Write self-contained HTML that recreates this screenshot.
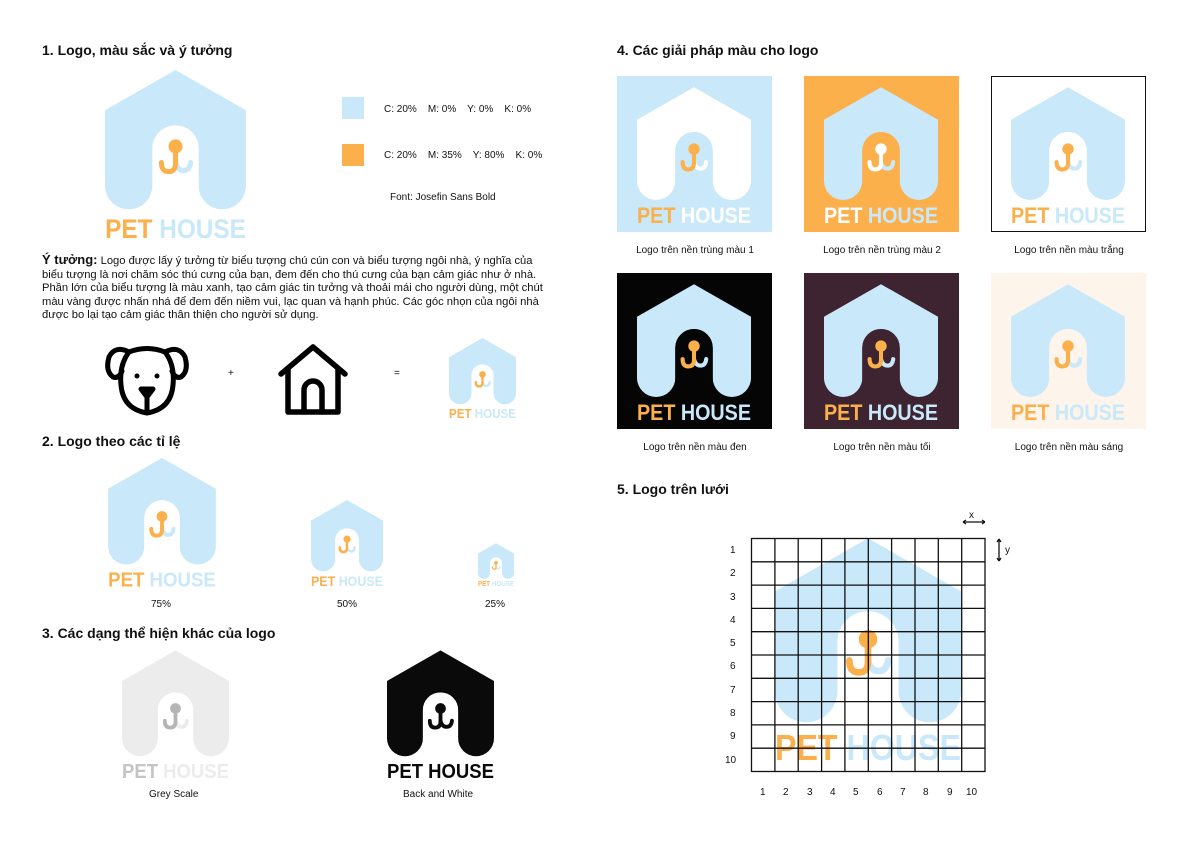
<!DOCTYPE html>
<html><head><meta charset="utf-8"><style>
body{margin:0;width:1191px;height:842px;background:#fff;position:relative;overflow:hidden;font-family:"Liberation Sans","DejaVu Sans",sans-serif;color:#111}
.a{position:absolute}
h2{position:absolute;margin:0;font-size:14px;font-weight:bold}
.s{font-size:10px;position:absolute;white-space:nowrap}
.box{position:absolute;width:155px;height:156px}
.c{text-align:center}
svg.l{position:absolute;overflow:visible}
</style></head><body>
<svg width="0" height="0" style="position:absolute">
<defs>
<symbol id="h" viewBox="0 0 140 140" overflow="visible">
<path d="M0 40 L70 0 L140 40 L140 115 A23.5 23.5 0 0 1 93 115 L93 78 A23 23 0 0 0 47 78 L47 115 A23.5 23.5 0 0 1 0 115 Z" style="fill:var(--h)"/>
<path d="M47 78 A23 23 0 0 1 93 78 L93 138 L47 138 Z" style="fill:var(--w)"/>
<path d="M70 92 Q72 100 78 100 Q84 100 85 92" fill="none" style="stroke:var(--b)" stroke-width="5" stroke-linecap="round"/>
<path d="M70 78 L70 93 Q70 101 63 101 Q56 101 56 92" fill="none" style="stroke:var(--o)" stroke-width="5" stroke-linecap="round"/>
<circle cx="70" cy="76" r="7" style="fill:var(--o)"/>
</symbol>
</defs></svg>

<h2 style="left:42px;top:42px">1. Logo, màu sắc và ý tưởng</h2>
<svg class="l" style="left:105px;top:70px;--h:#c9e8fa;--w:#fff;--o:#fbb04c;--b:#c9e8fa" width="141" height="170" viewBox="0 0 140 169"><use href="#h" width="140" height="140"/><text x="0" y="167" font-size="27" font-weight="bold" textLength="140" lengthAdjust="spacingAndGlyphs" fill="#fbb04c">PET <tspan fill="#c9e8fa">HOUSE</tspan></text></svg>
<div class="a" style="left:342px;top:97px;width:22px;height:22px;background:#c9e8fa"></div>
<div class="a" style="left:342px;top:144px;width:22px;height:22px;background:#fbb04c"></div>
<div class="s" style="left:384px;top:104px">C: 20% &nbsp;&nbsp; M: 0% &nbsp;&nbsp; Y: 0% &nbsp;&nbsp; K: 0%</div>
<div class="s" style="left:384px;top:150px">C: 20% &nbsp;&nbsp; M: 35% &nbsp;&nbsp; Y: 80% &nbsp;&nbsp; K: 0%</div>
<div class="s" style="left:390px;top:192px">Font: Josefin Sans Bold</div>
<div class="a" style="left:42px;top:253px;width:502px;font-size:11.2px;line-height:13.5px"><b style="font-size:13px">Ý tưởng:</b> Logo được lấy ý tưởng từ biểu tượng chú cún con và biểu tượng ngôi nhà, ý nghĩa của biểu tượng là nơi chăm sóc thú cưng của bạn, đem đến cho thú cưng của bạn cảm giác như ở nhà. Phần lớn của biểu tượng là màu xanh, tạo cảm giác tin tưởng và thoải mái cho người dùng, một chút màu vàng được nhấn nhá để đem đến niềm vui, lạc quan và hạnh phúc. Các góc nhọn của ngôi nhà được bo lại tạo cảm giác thân thiện cho người sử dụng.</div>

<svg class="l" style="left:105px;top:343px" width="84" height="74" viewBox="0 0 84 74" fill="none" stroke="#000" stroke-width="5" stroke-linecap="round" stroke-linejoin="round">
<path d="M24 9 Q42 2 60 9 Q70 22 68 42 Q66 66 42 70 Q18 66 16 42 Q14 22 24 9Z"/>
<path d="M24 9 Q10 2 4 14 Q0 28 8 34 Q14 36 17 28"/>
<path d="M60 9 Q74 2 80 14 Q84 28 76 34 Q70 36 67 28"/>
<path d="M36 46 L48 46 L42 54 Z" fill="#000"/><path d="M42 54 L42 69"/>
<circle cx="32" cy="33" r="2.5" fill="#000" stroke="none"/><circle cx="52" cy="33" r="2.5" fill="#000" stroke="none"/>
</svg>
<div class="s" style="left:228px;top:368px">+</div>
<svg class="l" style="left:278px;top:344px" width="70" height="71" viewBox="0 0 70 71" fill="none" stroke="#000" stroke-width="5.5" stroke-linecap="round" stroke-linejoin="round">
<path d="M3 30 L35 3 L67 30"/><path d="M10 25 L10 68 L60 68 L60 25"/><path d="M26 68 L26 46 A9 9 0 0 1 44 46 L44 68"/>
</svg>
<div class="s" style="left:394px;top:368px">=</div>
<svg class="l" style="left:449px;top:338px;--h:#c9e8fa;--w:#fff;--o:#fbb04c;--b:#c9e8fa" width="67" height="81" viewBox="0 0 140 169"><use href="#h" width="140" height="140"/><text x="0" y="167" font-size="27" font-weight="bold" textLength="140" lengthAdjust="spacingAndGlyphs" fill="#fbb04c">PET <tspan fill="#c9e8fa">HOUSE</tspan></text></svg>

<h2 style="left:42px;top:433px">2. Logo theo các tỉ lệ</h2>
<svg class="l" style="left:108px;top:458px;--h:#c9e8fa;--w:#fff;--o:#fbb04c;--b:#c9e8fa" width="108" height="130" viewBox="0 0 140 169"><use href="#h" width="140" height="140"/><text x="0" y="167" font-size="27" font-weight="bold" textLength="140" lengthAdjust="spacingAndGlyphs" fill="#fbb04c">PET <tspan fill="#c9e8fa">HOUSE</tspan></text></svg>
<div class="s" style="left:151px;top:599px">75%</div>
<svg class="l" style="left:311px;top:500px;--h:#c9e8fa;--w:#fff;--o:#fbb04c;--b:#c9e8fa" width="72" height="87" viewBox="0 0 140 169"><use href="#h" width="140" height="140"/><text x="0" y="167" font-size="27" font-weight="bold" textLength="140" lengthAdjust="spacingAndGlyphs" fill="#fbb04c">PET <tspan fill="#c9e8fa">HOUSE</tspan></text></svg>
<div class="s" style="left:337px;top:599px">50%</div>
<svg class="l" style="left:478px;top:543px;--h:#c9e8fa;--w:#fff;--o:#fbb04c;--b:#c9e8fa" width="36" height="44" viewBox="0 0 140 169"><use href="#h" width="140" height="140"/><text x="0" y="167" font-size="27" font-weight="bold" textLength="140" lengthAdjust="spacingAndGlyphs" fill="#fbb04c">PET <tspan fill="#c9e8fa">HOUSE</tspan></text></svg>
<div class="s" style="left:485px;top:599px">25%</div>

<h2 style="left:42px;top:625px">3. Các dạng thể hiện khác của logo</h2>
<svg class="l" style="left:122px;top:650px;--h:#ececec;--w:#fff;--o:#b5b5b5;--b:#ececec" width="107" height="130" viewBox="0 0 140 169"><use href="#h" width="140" height="140"/><text x="0" y="167" font-size="27" font-weight="bold" textLength="140" lengthAdjust="spacingAndGlyphs" fill="#c4c4c4">PET <tspan fill="#ececec">HOUSE</tspan></text></svg>
<div class="s" style="left:149px;top:789px">Grey Scale</div>
<svg class="l" style="left:387px;top:650px;--h:#0a0a0a;--w:#fff;--o:#0a0a0a;--b:#0a0a0a" width="107" height="130" viewBox="0 0 140 169"><use href="#h" width="140" height="140"/><text x="0" y="167" font-size="27" font-weight="bold" textLength="140" lengthAdjust="spacingAndGlyphs" fill="#0a0a0a">PET HOUSE</text></svg>
<div class="s" style="left:403px;top:789px">Back and White</div>

<h2 style="left:617px;top:42px">4. Các giải pháp màu cho logo</h2>
<div class="box" style="left:617px;top:76px;background:#c9e8fa"></div>
<div class="box" style="left:804px;top:76px;background:#fbb04c"></div>
<div class="box" style="left:991px;top:76px;background:#fff;border:1.5px solid #111;box-sizing:border-box"></div>
<div class="box" style="left:617px;top:273px;background:#050505"></div>
<div class="box" style="left:804px;top:273px;background:#3e2430"></div>
<div class="box" style="left:991px;top:273px;background:#fdf4ec"></div>
<svg class="l" style="left:637px;top:87px;--h:#fff;--w:#c9e8fa;--o:#fbb04c;--b:#fff" width="114" height="138" viewBox="0 0 140 169"><use href="#h" width="140" height="140"/><text x="0" y="167" font-size="27" font-weight="bold" textLength="140" lengthAdjust="spacingAndGlyphs" fill="#fbb04c">PET <tspan fill="#fff">HOUSE</tspan></text></svg>
<svg class="l" style="left:824px;top:87px;--h:#c9e8fa;--w:#fbb04c;--o:#fff;--b:#c9e8fa" width="114" height="138" viewBox="0 0 140 169"><use href="#h" width="140" height="140"/><text x="0" y="167" font-size="27" font-weight="bold" textLength="140" lengthAdjust="spacingAndGlyphs" fill="#fff">PET <tspan fill="#c9e8fa">HOUSE</tspan></text></svg>
<svg class="l" style="left:1011px;top:87px;--h:#c9e8fa;--w:#fff;--o:#fbb04c;--b:#c9e8fa" width="114" height="138" viewBox="0 0 140 169"><use href="#h" width="140" height="140"/><text x="0" y="167" font-size="27" font-weight="bold" textLength="140" lengthAdjust="spacingAndGlyphs" fill="#fbb04c">PET <tspan fill="#c9e8fa">HOUSE</tspan></text></svg>
<svg class="l" style="left:637px;top:284px;--h:#c9e8fa;--w:#050505;--o:#fbb04c;--b:#c9e8fa" width="114" height="138" viewBox="0 0 140 169"><use href="#h" width="140" height="140"/><text x="0" y="167" font-size="27" font-weight="bold" textLength="140" lengthAdjust="spacingAndGlyphs" fill="#fbb04c">PET <tspan fill="#c9e8fa">HOUSE</tspan></text></svg>
<svg class="l" style="left:824px;top:284px;--h:#c9e8fa;--w:#3e2430;--o:#fbb04c;--b:#c9e8fa" width="114" height="138" viewBox="0 0 140 169"><use href="#h" width="140" height="140"/><text x="0" y="167" font-size="27" font-weight="bold" textLength="140" lengthAdjust="spacingAndGlyphs" fill="#fbb04c">PET <tspan fill="#c9e8fa">HOUSE</tspan></text></svg>
<svg class="l" style="left:1011px;top:284px;--h:#c9e8fa;--w:#fdf4ec;--o:#fbb04c;--b:#c9e8fa" width="114" height="138" viewBox="0 0 140 169"><use href="#h" width="140" height="140"/><text x="0" y="167" font-size="27" font-weight="bold" textLength="140" lengthAdjust="spacingAndGlyphs" fill="#fbb04c">PET <tspan fill="#c9e8fa">HOUSE</tspan></text></svg>
<div class="s c" style="left:600px;width:190px;top:245px">Logo trên nền trùng màu 1</div>
<div class="s c" style="left:787px;width:190px;top:245px">Logo trên nền trùng màu 2</div>
<div class="s c" style="left:974px;width:190px;top:245px">Logo trên nền màu trắng</div>
<div class="s c" style="left:600px;width:190px;top:442px">Logo trên nền màu đen</div>
<div class="s c" style="left:787px;width:190px;top:442px">Logo trên nền màu tối</div>
<div class="s c" style="left:974px;width:190px;top:442px">Logo trên nền màu sáng</div>

<h2 style="left:617px;top:481px">5. Logo trên lưới</h2>
<svg class="l" style="left:775px;top:538px;--h:#c9e8fa;--w:#fff;--o:#fbb04c;--b:#c9e8fa" width="186" height="225" viewBox="0 0 140 169"><use href="#h" width="140" height="140"/><text x="0" y="167" font-size="27" font-weight="bold" textLength="140" lengthAdjust="spacingAndGlyphs" fill="#fbb04c">PET <tspan fill="#c9e8fa">HOUSE</tspan></text></svg>
<svg class="l" style="left:0;top:0" width="1191" height="842">
<g stroke="#111" stroke-width="1.3" fill="none">
<rect x="751.5" y="538.5" width="233.5" height="233"/>
<path d="M774.9 538V772M798.2 538V772M821.6 538V772M844.9 538V772M868.3 538V772M891.6 538V772M915 538V772M938.3 538V772M961.7 538V772"/>
<path d="M751 561.8H985M751 585.1H985M751 608.4H985M751 631.7H985M751 655H985M751 678.3H985M751 701.6H985M751 724.9H985M751 748.2H985"/>
<path d="M963 522H985M963 522l3-2M963 522l3 2M985 522l-3-2M985 522l-3 2"/>
<path d="M999 539V561M999 539l-2 3M999 539l2 3M999 561l-2-3M999 561l2-3"/>
</g>
<g font-size="10" fill="#111" font-family="Liberation Sans,sans-serif">
<text x="969" y="518">x</text><text x="1005" y="553">y</text>
<text x="730" y="553">1</text><text x="730" y="576">2</text><text x="730" y="600">3</text><text x="730" y="623">4</text><text x="730" y="646">5</text><text x="730" y="669">6</text><text x="730" y="693">7</text><text x="730" y="716">8</text><text x="730" y="739">9</text><text x="725" y="763">10</text>
<text x="760" y="795">1</text><text x="783" y="795">2</text><text x="807" y="795">3</text><text x="830" y="795">4</text><text x="853" y="795">5</text><text x="877" y="795">6</text><text x="900" y="795">7</text><text x="923" y="795">8</text><text x="947" y="795">9</text><text x="966" y="795">10</text>
</g></svg>
</body></html>
